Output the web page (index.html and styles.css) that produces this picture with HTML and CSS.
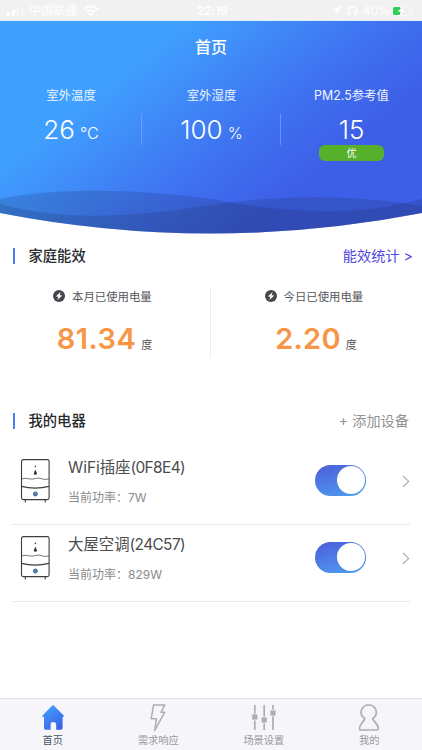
FILE: index.html
```html
<!DOCTYPE html>
<html lang="zh-CN">
<head>
<meta charset="utf-8">
<title>首页</title>
<link rel="stylesheet" href="styles.css">
</head>
<body>
<svg class="defs" width="0" height="0" aria-hidden="true">
  <symbol id="bolt" viewBox="0 0 12 12"><circle cx="6" cy="6" r="6" fill="#45474c"/><path d="M7.6 1.9 2.8 6.5 5.4 6.7 4.4 10.1 9.3 5.4 6.7 5.2Z" fill="#fff"/></symbol>
  <symbol id="heater" viewBox="0 0 30 45">
    <g fill="none" stroke="#3c3e42" stroke-width="1.1">
      <rect x="1.5" y="1.6" width="27.6" height="40" rx="1.8"/>
      <path d="M1.5 28.3Q15 31.8 29 28.3" stroke-width="1.3"/>
      <path d="M1.5 21Q5 19.7 8.5 20.7T15.5 20.5T22 20.8T29 20.8" stroke-width=".7"/>
      <path d="M5.3 41.6V44.5M25.2 41.6V44.5"/>
    </g>
    <path d="M15.3 11.5 16.9 15.2Q17 16.8 15.4 16.8T13.9 15.2Z" fill="#333"/>
    <circle cx="15.4" cy="8.4" r=".8" fill="#444"/>
    <circle cx="15.4" cy="36" r="2" fill="#4e86d0" stroke="#365482" stroke-width=".8"/>
  </symbol>
  <symbol id="chevron" viewBox="0 0 8 13"><path d="M1 1 6.7 6.4 1 11.8" fill="none" stroke="#a9aeb8" stroke-width="1.2"/></symbol>
</svg>
<div class="app">
  <div class="status">
    <svg class="signal" width="17" height="10" viewBox="0 0 17 10"><g fill="#fff"><rect y="6" width="3" height="4" rx=".7"/><rect x="5" y="4" width="3" height="6" rx=".7"/></g><g fill="#f6f6f6"><rect x="9.5" y="2" width="3" height="8" rx=".7"/><rect x="14" width="3" height="10" rx=".7"/></g></svg>
    <span class="carrier">中国联通</span>
    <svg class="wifi" width="16" height="12" viewBox="0 0 16 12"><g fill="none" stroke="#fff" stroke-width="2"><path d="M1 4.2Q8-1.7 15 4.2M3.7 7Q8 3.5 12.3 7"/></g><path d="M5.8 9Q8 7.2 10.2 9L8 11.3Z" fill="#fff"/></svg>
    <span class="time">22:19</span>
    <svg class="locate" width="9" height="9" viewBox="0 0 9 9"><path d="M9 0 5 9 4.3 4.8 0 4Z" fill="#fff"/></svg>
    <svg class="phones" width="11" height="10" viewBox="0 0 11 10"><path d="M2 8Q.8 7 .8 5.2A4.7 4.5 0 0 1 10.2 5.2Q10.2 7 9 8" fill="none" stroke="#fff" stroke-width="1.2"/><path d="M1.5 5.5h2V9.5h-2zM7.5 5.5h2V9.5h-2z" fill="#fff"/></svg>
    <span class="level">40%</span>
    <svg class="battery" width="22" height="10" viewBox="0 0 22 10"><rect x=".5" y=".5" width="18.5" height="9" rx="2.5" fill="none" stroke="#f8f8f8"/><rect x="1" y="1" width="7.5" height="8" rx="1.5" fill="#2fce5b"/><path d="M11.5.5 5.5 5.5H9L7.5 9.5 13 4.5H9.7Z" fill="#fff"/><path d="M20.5 3.2Q22 5 20.5 6.8Z" fill="#f8f8f8"/></svg>
  </div>
  <header class="hero">
    <svg class="waves" width="422" height="213" viewBox="0 21 422 213" preserveAspectRatio="none">
      <defs>
        <linearGradient id="sky" gradientUnits="userSpaceOnUse" x1="84" y1="100" x2="211" y2="260"><stop stop-color="#40a0ff"/><stop offset=".65" stop-color="#3f70f0"/><stop offset="1" stop-color="#3d5ee6"/></linearGradient>
        <clipPath id="bowl"><path d="M0 21H422V213Q211 254 0 213Z"/></clipPath>
      </defs>
      <g clip-path="url(#bowl)">
        <path d="M0 21H422V240H0Z" fill="url(#sky)"/>
        <path d="M0 199C55 187 140 189 211 199C290 214 355 217 422 199V240H0Z" fill="#182b55" fill-opacity=".19"/>
        <path d="M0 204C60 220 120 219 211 205C280 195 350 194 422 206V240H0Z" fill="#182b55" fill-opacity=".19"/>
      </g>
    </svg>
    <h1>首页</h1>
    <div class="weather">
      <div class="cell"><p>室外温度</p><div class="reading">26<small>℃</small></div></div>
      <div class="cell"><p>室外湿度</p><div class="reading">100<small>%</small></div></div>
      <div class="cell"><p>PM2.5参考值</p><div class="reading">15</div><span class="grade">优</span></div>
    </div>
  </header>
  <section class="energy">
    <div class="heading"><h2>家庭能效</h2><a class="stats">能效统计 &gt;</a></div>
    <div class="usage">
      <div class="meter"><p><svg width="12" height="12"><use href="#bolt"/></svg>本月已使用电量</p><div class="amount">81.34<small>度</small></div></div>
      <div class="meter"><p><svg width="12" height="12"><use href="#bolt"/></svg>今日已使用电量</p><div class="amount">2.20<small>度</small></div></div>
    </div>
  </section>
  <section class="devices">
    <div class="heading"><h2>我的电器</h2><a class="add">+ 添加设备</a></div>
    <div class="device">
      <svg width="30" height="45"><use href="#heater"/></svg>
      <div class="info"><h3>WiFi插座<span>(0F8E4)</span></h3><p>当前功率：7W</p></div>
      <span class="switch"><i></i></span>
      <svg class="go" width="8" height="13"><use href="#chevron"/></svg>
    </div>
    <div class="device">
      <svg width="30" height="45"><use href="#heater"/></svg>
      <div class="info"><h3>大屋空调<span>(24C57)</span></h3><p>当前功率：829W</p></div>
      <span class="switch"><i></i></span>
      <svg class="go" width="8" height="13"><use href="#chevron"/></svg>
    </div>
  </section>
  <nav class="tabs">
    <a class="tab active">
      <svg width="28" height="28" viewBox="0 0 28 28"><defs><linearGradient id="house" x1=".2" y1="0" x2=".8" y2="1"><stop stop-color="#41a0fb"/><stop offset="1" stop-color="#3e5ee8"/></linearGradient></defs><path d="M13.3 1.5Q14 .9 14.7 1.5L24.7 11.4Q25.5 12.8 24 13H23.6V24Q23.6 25.7 22 25.7H17.2V20Q17 18 14.3 18T11.6 20V25.7H6.5Q5 25.7 5 24V13H4Q2.7 12.8 3.5 11.4Z" fill="url(#house)"/></svg>
      <span>首页</span>
    </a>
    <a class="tab">
      <svg width="28" height="28" viewBox="0 0 28 28"><path d="M9.6 1H20.8L17 8.3H20.6L10.8 26.5 12.4 14.8H7.2Z" fill="none" stroke="#a9aeb7" stroke-width="1.5" stroke-linejoin="round"/></svg>
      <span>需求响应</span>
    </a>
    <a class="tab">
      <svg width="28" height="28" viewBox="0 0 28 28"><path d="M4.8 1V26M14.2 1V26M23 1V26" stroke="#a9aeb7" stroke-width="1.7"/><g fill="#a9aeb7" stroke="#f6f6fa" stroke-width=".8"><rect x="1.8" y="10" width="6" height="6" rx=".8"/><rect x="11.2" y="13" width="6" height="6" rx=".8"/><rect x="20" y="6" width="6" height="6" rx=".8"/></g></svg>
      <span>场景设置</span>
    </a>
    <a class="tab">
      <svg width="28" height="28" viewBox="0 0 28 28"><path d="M9.8 14.5C2.7 9.7 6.7 1 13.7 1S24.7 9.7 17.7 14.5C18.6 18 23.5 20.2 23.3 24.2Q23.2 26 21.7 26H6Q4.5 26 4.5 24.2C4.5 20 9 18 9.8 14.5Z" fill="none" stroke="#a9aeb7" stroke-width="1.7"/></svg>
      <span>我的</span>
    </a>
  </nav>
</div>
</body>
</html>
```
FILE: styles.css
```css
* { box-sizing: border-box; }
body { margin: 0; background: #fff; font-family: Inter, "Noto Sans CJK SC", sans-serif; color: #333; }
h1, h2, h3, p { margin: 0; font-weight: 400; }
svg { display: block; flex: none; }
.defs { position: absolute; }
.app { width: 422px; height: 750px; display: flex; flex-direction: column; overflow: hidden; }

.status { height: 21px; flex: none; background: #f1f1f1; border-bottom: 1px solid #e1edf7; color: #fff; font-size: 12px; line-height: 20px; display: flex; align-items: center; padding: 1px 7px 0; white-space: nowrap; }
.carrier { margin-left: 5px; width: 49px; }
.wifi { margin-left: 5px; }
.time { margin-left: 98px; width: 34px; font-weight: 500; letter-spacing: -.1px; }
.locate { margin-left: 101px; }
.phones { margin-left: 6px; }
.level { margin-left: 5px; width: 27px; }
.battery { margin-left: 2px; }

.hero { position: relative; height: 213px; flex: none; color: #fff; }
.waves { position: absolute; left: 0; top: 0; }
.hero h1 { position: relative; padding-top: 14px; text-align: center; font-size: 16px; line-height: 24px; font-weight: 500; }
.weather { position: relative; display: grid; grid-template-columns: 142px 139px 141px; margin-top: 28px; }
.cell { height: 76px; text-align: center; background: linear-gradient(#8fb4fc80, #8fb4fc80) right 27px / 1px 31px no-repeat; }
.cell:last-child { background: none; }
.cell p { font-size: 12.4px; line-height: 18px; color: #eef4ff; }
.reading { font-size: 26px; line-height: 32px; margin-top: 9px; font-weight: 360; }
.reading small { font-size: 16px; margin-left: 5px; }
.grade { display: block; width: 65px; height: 16px; margin: -1px auto 0; border-radius: 6px; background: #56b02b; font-size: 10px; line-height: 17px; }

.heading { display: flex; align-items: center; justify-content: space-between; height: 22px; }
.heading h2 { border-left: 2px solid #4b7fe8; padding-left: 14px; font-size: 14.3px; line-height: 16px; font-weight: 500; color: #27292d; }
.energy { padding: 11px 9px 0 12.5px; height: 176px; flex: none; }
.stats, .add { padding-bottom: 2px; font-size: 14.2px; }
.stats { color: #5148dd; }
.usage { display: grid; grid-template-columns: 198px 211px; margin: 20px 0 0; }
.meter { height: 71px; border-right: 1px solid #ededed; text-align: center; }
.meter:last-child { border: 0; }
.meter p { display: flex; align-items: center; gap: 7px; height: 17px; padding-left: 40.5px; font-size: 11.4px; color: #55575c; }
.meter:last-child p { padding-left: 54px; }
.amount { margin-top: 16px; font-size: 29px; line-height: 38px; font-weight: 600; color: #f79646; letter-spacing: .5px; padding-right: 13px; }
.meter:last-child .amount { padding-right: 0; letter-spacing: .3px; }
.amount small { font-size: 11px; font-weight: 400; color: #55575c; margin-left: 5px; letter-spacing: 0; }

.devices { flex: 1; padding: 0 12px; }
.devices .heading { padding: 0 1px 0 .5px; }
.add { color: #929292; }
.device { height: 77px; display: flex; align-items: center; border-bottom: 1px solid #e9e9e9; padding: 0 0 12px 8px; }
.device:nth-child(2) { height: 93px; padding-top: 16px; }
.info { width: 247px; padding-left: 18px; padding-top: 2px; }
.info h3 { font-size: 15.4px; line-height: 24px; color: #4b4c50; white-space: nowrap; }
.info h3 span { letter-spacing: -.6px; }
.info p { font-size: 12px; line-height: 18px; margin-top: 9px; color: #8b8b8b; }
.switch { width: 51px; height: 31px; margin-left: 18px; border-radius: 16px; background: linear-gradient(165deg, #4c64dc 10%, #4f9bf0 95%); padding: 1.5px; display: flex; justify-content: flex-end; }
.switch i { width: 28px; height: 28px; border-radius: 50%; background: #fff; }
.go { margin: 2px 0 0 auto; }

.tabs { height: 52px; flex: none; border-top: 1px solid #dfdfe0; background: #f6f6fa; display: grid; grid-template-columns: repeat(4, 1fr); }
.tab { display: flex; flex-direction: column; align-items: center; padding-top: 5px; font-size: 10.2px; line-height: 17px; color: #98999c; }
.tab.active { color: #48566c; }
```
